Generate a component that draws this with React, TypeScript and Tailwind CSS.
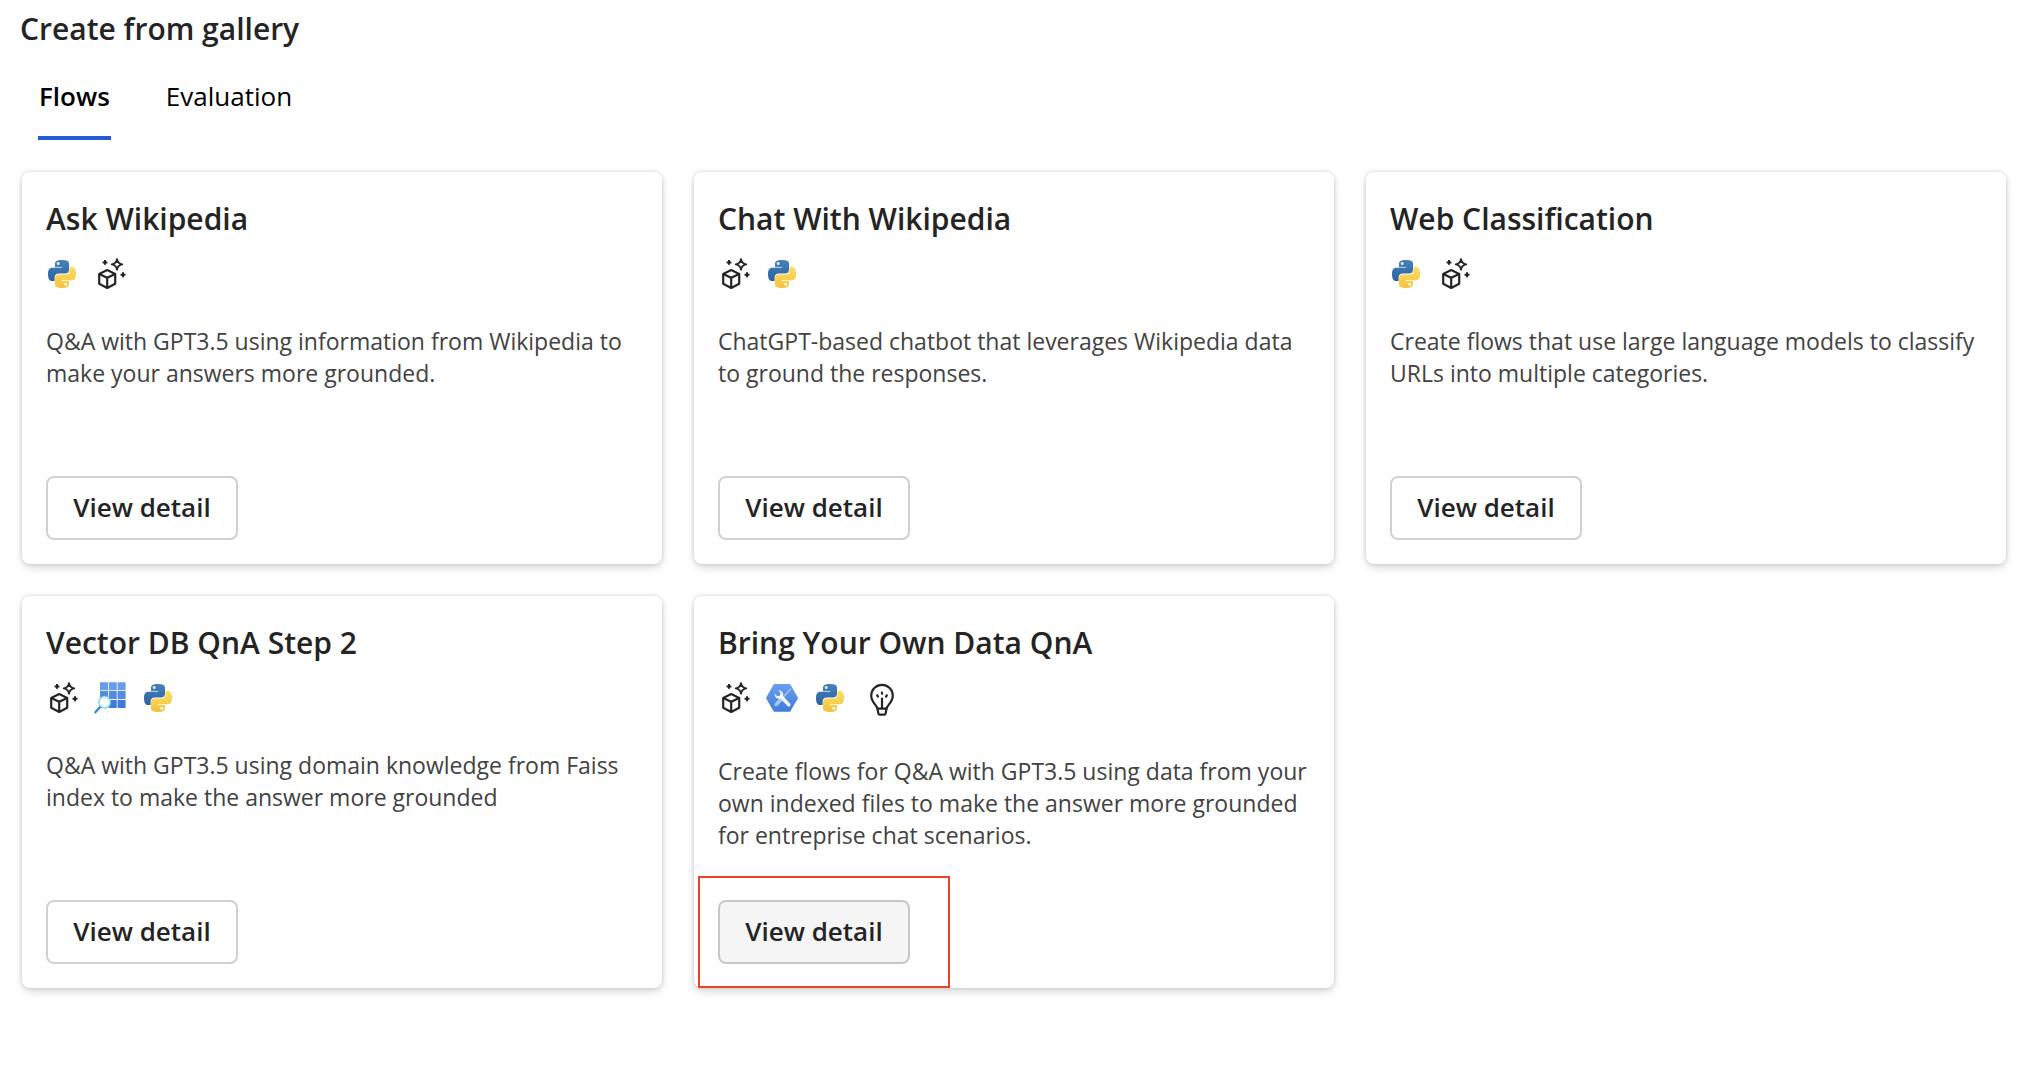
import React from 'react';

type IconName = 'python' | 'llm' | 'lookup' | 'tools' | 'prompt';

interface Flow {
  title: string;
  icons: IconName[];
  description: string;
  highlighted?: boolean;
}

const flows: Flow[] = [
  {
    title: 'Ask Wikipedia',
    icons: ['python', 'llm'],
    description: 'Q&A with GPT3.5 using information from Wikipedia to make your answers more grounded.',
  },
  {
    title: 'Chat With Wikipedia',
    icons: ['llm', 'python'],
    description: 'ChatGPT-based chatbot that leverages Wikipedia data to ground the responses.',
  },
  {
    title: 'Web Classification',
    icons: ['python', 'llm'],
    description: 'Create flows that use large language models to classify URLs into multiple categories.',
  },
  {
    title: 'Vector DB QnA Step 2',
    icons: ['llm', 'lookup', 'python'],
    description: 'Q&A with GPT3.5 using domain knowledge from Faiss index to make the answer more grounded',
  },
  {
    title: 'Bring Your Own Data QnA',
    icons: ['llm', 'tools', 'python', 'prompt'],
    description:
      'Create flows for Q&A with GPT3.5 using data from your own indexed files to make the answer more grounded for entreprise chat scenarios.',
    highlighted: true,
  },
];

const snake =
  'M14 0C9 0 7 1.400 7 4V6.900H14.200V7.700H4.200C1.300 7.700 0 10 0 14.200C0 18.600 1.400 21 4 21H6.600V17.300C6.600 14.900 8.400 13.500 10.800 13.500H17.200C19.400 13.500 21 12 21 9.800V4C21 1.400 18.800 0 14 0Z';

function PythonIcon() {
  return (
    <svg viewBox="0 0 32 32" className="size-8" aria-hidden="true">
      <defs>
        <linearGradient id="py-blue" x1="0" y1="0" x2="0" y2="1">
          <stop offset="0" stopColor="#4580bd" />
          <stop offset="1" stopColor="#2f619f" />
        </linearGradient>
        <linearGradient id="py-yellow" x1="0" y1="1" x2="0" y2="0">
          <stop offset="0" stopColor="#fbdd65" />
          <stop offset="1" stopColor="#f2c43c" />
        </linearGradient>
      </defs>
      <g transform="translate(2 2)">
        <path d={snake} fill="url(#py-blue)" />
        <circle cx="10.200" cy="3.600" r="1.400" fill="#fff" />
        <path d="M7 7.300H14" stroke="#a9c4e2" strokeWidth="0.900" />
        <g transform="rotate(180 14 14)">
          <path d={snake} fill="url(#py-yellow)" />
          <circle cx="10.200" cy="3.600" r="1.400" fill="#fff" />
          <path d="M7 7.300H14" stroke="#fdf0bd" strokeWidth="0.900" />
        </g>
      </g>
    </svg>
  );
}

function LlmIcon() {
  return (
    <svg viewBox="0 0 32 32" className="size-8" fill="none" stroke="#242424" strokeWidth="2.200" strokeLinejoin="round" aria-hidden="true">
      <path d="M13.200 12L21.200 15.900V25.800L13.200 29.900L5.200 25.800V15.900Z" />
      <path d="M5.200 15.900L13.200 19.800L21.200 15.900M13.200 19.800V29.900" />
      <path d="M23 1.200Q23.700 5.600 28.200 6.400Q23.700 7.200 23 11.700Q22.300 7.200 17.800 6.400Q22.300 5.600 23 1.200Z" strokeWidth="1.900" />
      <path d="M11 2V6.800M8.600 4.400H13.400M29 14.200V19.200M26.500 16.700H31.500" strokeWidth="2" />
    </svg>
  );
}

function LookupIcon() {
  return (
    <svg viewBox="0 0 32 32" className="size-8" aria-hidden="true">
      {[6, 14.8, 23.6].map((x) => (
        <g key={x}>
          <rect x={x} y="0.3" width="8" height="8" rx="0.6" fill="#6a9cec" />
          <rect x={x} y="9.1" width="8" height="8" rx="0.6" fill="#538be2" />
          <rect x={x} y="17.900" width="8" height="8" rx="0.6" fill="#3f7ad6" />
        </g>
      ))}
      <path d="M1.400 30.300L6 25" stroke="#3a86b4" strokeWidth="2.200" strokeLinecap="round" />
      <circle cx="10.600" cy="20.300" r="5.700" fill="#fff" stroke="#79dcf9" strokeWidth="1.500" />
    </svg>
  );
}

function ToolsIcon() {
  return (
    <svg viewBox="0 0 32 32" className="size-8" aria-hidden="true">
      <defs>
        <linearGradient id="hex-blue" x1="0" y1="0" x2="0" y2="1">
          <stop offset="0" stopColor="#6b9eef" />
          <stop offset="1" stopColor="#3f7dd8" />
        </linearGradient>
      </defs>
      <path d="M8.500 2H23.500Q24.100 2 24.400 2.500L31.800 15.400Q32.100 16 31.800 16.500L24.400 29.200Q24.100 29.700 23.500 29.700H8.500Q7.900 29.700 7.600 29.200L0.200 16.500Q-0.100 16 0.200 15.400L7.600 2.500Q7.900 2 8.500 2Z" fill="url(#hex-blue)" />
      <path d="M24.500 7.200L17.500 14.800" stroke="#a9c8f8" strokeWidth="1.400" strokeLinecap="round" />
      <path d="M16.500 15.800L10.200 22.400" stroke="#a9c8f8" strokeWidth="3.600" strokeLinecap="round" />
      <path d="M12.500 8.300A4.300 4.300 0 0 1 17 14L24 21.500A1.700 1.700 0 0 1 21.600 24L14.300 16.600A4.300 4.300 0 0 1 8.700 11.800L11.400 14.200L14 13.500L14.500 11Z" fill="#f7f7f7" />
    </svg>
  );
}

function PromptIcon() {
  return (
    <svg viewBox="0 0 40 38" className="h-[38px] w-10" fill="none" stroke="#242424" strokeWidth="2.200" strokeLinejoin="round" strokeLinecap="round" aria-hidden="true">
      <path d="M15.500 26.700C15.200 23.400 9.200 20.300 9.200 13.700A10.800 10.800 0 0 1 30.800 13.700C30.800 20.300 24.800 23.400 24.500 26.700Z" />
      <path d="M15.500 26.700L16.400 31.600Q16.600 32.700 17.700 32.700H22.300Q23.400 32.700 23.600 31.600L24.500 26.700" />
      <path d="M20 16.500V26M20 10.500V11.800M15.200 13.300L16 14.600M24.800 13.300L24 14.600" />
    </svg>
  );
}

const icons: Record<IconName, () => React.JSX.Element> = {
  python: PythonIcon,
  llm: LlmIcon,
  lookup: LookupIcon,
  tools: ToolsIcon,
  prompt: PromptIcon,
};

function FlowCard({ flow }: { flow: Flow }) {
  return (
    <article className="flex min-h-[392px] flex-col rounded-lg bg-white p-6 shadow-[0_0_4px_rgba(0,0,0,0.14),0_4px_8px_rgba(0,0,0,0.14)]">
      <h2 className="text-[30px] leading-[46px] font-semibold">{flow.title}</h2>
      <div className="mt-4 flex items-start gap-4">
        {flow.icons.map((name) => {
          const Icon = icons[name];
          return <Icon key={name} />;
        })}
      </div>
      <p className="mt-[35px] text-[23px] leading-8 text-[#424242]">{flow.description}</p>
      <div className="relative mt-auto w-fit">
        <button
          type="button"
          className={`h-16 w-48 rounded-lg border-2 pb-0.5 text-[26px] leading-8 font-semibold whitespace-nowrap ${
            flow.highlighted ? 'border-[#c7c7c7] bg-[#f5f5f5]' : 'border-[#d1d1d1] bg-white'
          }`}
        >
          View detail
        </button>
        {flow.highlighted && (
          <span className="pointer-events-none absolute -top-6 -right-10 -bottom-6 -left-5 border-2 border-[#ee4027]" />
        )}
      </div>
    </article>
  );
}

export default function App() {
  const [tab, setTab] = React.useState('Flows');
  return (
    <main className="min-h-screen bg-white pt-2 pb-8 font-['Open_Sans',sans-serif] text-[#242424]">
      <h1 className="pl-5 text-[30px] leading-[42px] font-semibold">Create from gallery</h1>
      <div role="tablist" aria-label="Gallery" className="mt-[26px] flex gap-[54px] pl-[38px] text-[26px] leading-10 text-black">
        {['Flows', 'Evaluation'].map((name) => (
          <button
            key={name}
            type="button"
            role="tab"
            aria-selected={tab === name}
            onClick={() => setTab(name)}
            className={`border-b-4 px-px pb-5 ${
              tab === name ? 'border-[#245bdb] font-semibold' : 'border-transparent'
            }`}
          >
            {name}
          </button>
        ))}
      </div>
      <section className="mt-8 grid grid-cols-3 gap-8 pr-5 pl-[22px]">
        {flows.map((flow) => (
          <FlowCard key={flow.title} flow={flow} />
        ))}
      </section>
    </main>
  );
}
